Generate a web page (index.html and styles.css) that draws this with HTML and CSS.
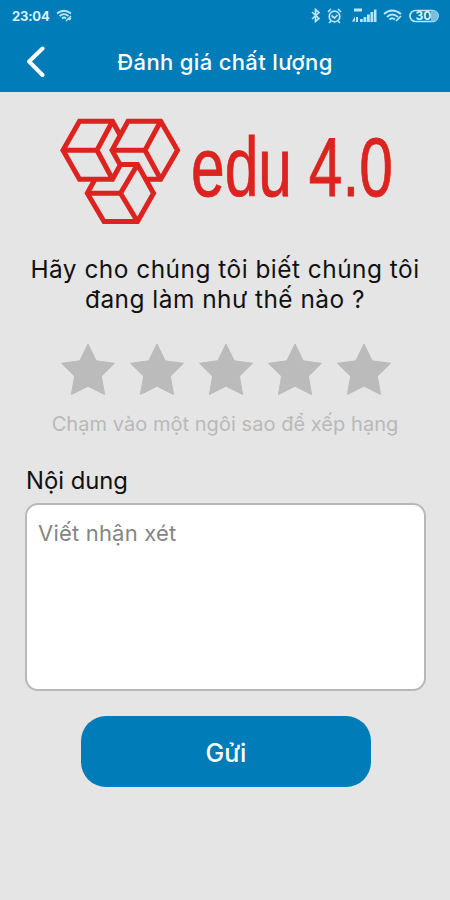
FILE: index.html
```html
<!DOCTYPE html>
<html lang="vi">
<head>
<meta charset="utf-8">
<title>Đánh giá chất lượng</title>
<link rel="stylesheet" href="styles.css">
</head>
<body>
<header class="header">
  <div class="status">
    <span class="time">23:04</span>
    <svg class="status-wifi" width="18" height="14" viewBox="0 0 18 14" fill="none" stroke="#b9e6f8" stroke-width="1.8"><path d="M1 4.5Q8 -1 15 4.5M3.5 7Q8 3.200 12.500 7M6 9.500Q8 7.500 10 9.500"/><path d="M10 12l5-5M13 11l2-2" stroke-width="1.500"/></svg>
    <svg class="status-icons" width="130" height="20" viewBox="310 6 130 20" fill="none" stroke="#b9e6f8" stroke-width="1.700">
      <path d="M312 12l7 6.500-3.500 3V9.500l3.500 3-7 6.500"/>
      <circle cx="334.500" cy="16.500" r="5.300"/><path d="M328 12l3-3M341 12l-3-3M331.500 15.500l3 2.500 3-3M331 21l-2 2M338 21l2 2"/>
      <g fill="#b9e6f8" stroke="none"><path d="M354 8.500h8v3h-8zM352 21.500l3-5v5zM356 17h2v5h-2zM360 19h2.800v3H360zM363.500 17h2.800v5h-2.800zM367 14.500h2.800V22H367zM370.500 12h2.800v10h-2.800zM374 9.500h2.500V22H374z"/></g>
      <path d="M384 14Q392 7 401 14M387 17Q392 12 398 17M389.500 19.500Q392 17 395 19.500" stroke-width="2"/><path d="M396 21l5-5"/>
      <rect x="410" y="10.500" width="28" height="11" rx="5.500"/><path d="M431 10.500h2q5 0 5 5.500t-5 5.500h-2z" fill="#75bfdf" stroke="none"/>
      <text class="battery" x="423.500" y="20.300" text-anchor="middle">30</text>
    </svg>
  </div>
  <div class="nav">
    <svg class="back" width="20" height="34" viewBox="0 0 20 34"><path d="M15.500 3.500L2 16.500 15.500 30" fill="none" stroke="#fff" stroke-width="4" stroke-linecap="round"/></svg>
    <h1 class="title">Đánh giá chất lượng</h1>
  </div>
</header>
<main class="content">
  <svg class="logo" width="345" height="110" viewBox="56 116 345 110">
    <path fill="none" stroke="#dc231f" stroke-width="5" d="M120 135L112.500 121.300H79.500L63 150.300 79.500 179.300H112.500L120.500 164.500H137.500L153.500 193.300 137.500 221.500H104L87.300 193.300 95 179.300M120 164.500L112 150.300 128 121.300H160.700L177.500 150.300 160.700 179.300H145.500M63 150.300H97L112.500 121.300M97 150.300L112.500 179.300M112 150.300H145L160.700 121.300M145 150.300L160.700 179.300M87.300 193.300H120.500L137.500 164.500M120.500 193.300L137.500 221.500"/>
    <text class="logo-text" x="191" y="196" textLength="202" lengthAdjust="spacingAndGlyphs">edu 4.0</text>
  </svg>
  <h2 class="question">Hãy cho chúng tôi biết chúng tôi<br>đang làm như thế nào ?</h2>
  <div class="stars">
    <svg viewBox="0 0 54 52"><path d="M27 1L35.200 17.800 53.500 20.300 40.400 33.200 43.600 51.500 27 43.200 10.400 51.500 13.600 33.200 .5 20.300 18.800 17.800Z"/></svg>
    <svg viewBox="0 0 54 52"><path d="M27 1L35.200 17.800 53.500 20.300 40.400 33.200 43.600 51.500 27 43.200 10.400 51.500 13.600 33.200 .5 20.300 18.800 17.800Z"/></svg>
    <svg viewBox="0 0 54 52"><path d="M27 1L35.200 17.800 53.500 20.300 40.400 33.200 43.600 51.500 27 43.200 10.400 51.500 13.600 33.200 .5 20.300 18.800 17.800Z"/></svg>
    <svg viewBox="0 0 54 52"><path d="M27 1L35.200 17.800 53.500 20.300 40.400 33.200 43.600 51.500 27 43.200 10.400 51.500 13.600 33.200 .5 20.300 18.800 17.800Z"/></svg>
    <svg viewBox="0 0 54 52"><path d="M27 1L35.200 17.800 53.500 20.300 40.400 33.200 43.600 51.500 27 43.200 10.400 51.500 13.600 33.200 .5 20.300 18.800 17.800Z"/></svg>
  </div>
  <p class="hint">Chạm vào một ngôi sao để xếp hạng</p>
  <label class="label" for="comment">Nội dung</label>
  <textarea class="comment" id="comment" placeholder="Viết nhận xét"></textarea>
  <button class="submit">Gửi</button>
</main>
</body>
</html>
```
FILE: styles.css
```css
* { box-sizing: border-box; }
body { margin: 0; height: 900px; background: #e5e5e5; font-family: Inter, sans-serif; color: #111; overflow: hidden; }
.header { height: 92px; background: #007cb8; color: #fff; }
.status { height: 32px; display: flex; align-items: center; padding: 0 10px 0 12px; }
.time { font: 700 13px/32px Inter, sans-serif; color: #d8f3ff; width: 44px; white-space: nowrap; letter-spacing: -.2px; }
.status-icons { margin-left: auto; }
.battery { font: 700 12px Inter, sans-serif; fill: #d8f3ff; stroke: none; }
.nav { height: 60px; display: grid; grid-template-columns: 50px 350px 50px; align-items: center; }
.back { margin-left: 27px; }
.title { margin: 0; text-align: center; font-size: 22px; line-height: 60px; font-weight: 500; white-space: nowrap; letter-spacing: .35px; }
.content { padding: 24px 25px 0; display: flex; flex-direction: column; }
.logo { margin-left: 31px; overflow: visible; }
.logo-text { font: 84px "Liberation Sans", sans-serif; fill: #dc231f; stroke: #dc231f; stroke-width: .8px; }
.question { margin: 28px -20px 0; font-size: 24.4px; line-height: 30px; font-weight: 400; text-align: center; white-space: nowrap; letter-spacing: .5px; }
.stars { display: flex; gap: 15px; margin: 29px 0 0 36px; }
.stars svg { width: 54px; height: 52px; fill: #bbb; stroke: #bbb; stroke-linejoin: round; }
.hint { margin: 14px 0 0; text-align: center; color: #b9b9b9; font-size: 20px; line-height: 30px; white-space: nowrap; letter-spacing: .05px; }
.label { margin: 27px 0 0 1px; font-size: 23.8px; line-height: 30px; }
.comment { display: block; margin-top: 7px; width: 401px; height: 188px; border: 2px solid #b8b8b8; border-radius: 13px; background: #fff; padding: 13px 11px; resize: none; outline: none; font: 22px/30px Inter, sans-serif; letter-spacing: .2px; }
.comment::placeholder { color: #858585; opacity: 1; }
.submit { margin: 25px 0 0 56px; width: 290px; height: 71px; border: 0; border-radius: 25px; background: #007cb8; color: #fff; font: 500 25px/71px Inter, sans-serif; padding: 2px 0 0; }
```
